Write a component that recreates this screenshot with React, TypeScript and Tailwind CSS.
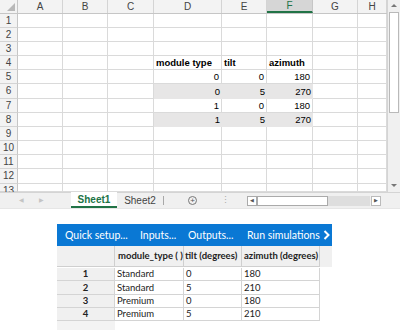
import React from 'react'

const cols = [
  { key: 'A', w: 45 },
  { key: 'B', w: 45 },
  { key: 'C', w: 46 },
  { key: 'D', w: 68 },
  { key: 'E', w: 45 },
  { key: 'F', w: 46 },
  { key: 'G', w: 45 },
  { key: 'H', w: 29 },
]

const rowHeights = [14, 14, 14, 14, 14, 15, 14, 14, 14, 14, 14, 15, 8]

type Cell = { text: string; bold?: boolean; right?: boolean; shade?: boolean }

const cells: Record<string, Cell> = {
  D4: { text: 'module type', bold: true },
  E4: { text: 'tilt', bold: true },
  F4: { text: 'azimuth', bold: true },
  D5: { text: '0', right: true },
  E5: { text: '0', right: true },
  F5: { text: '180', right: true },
  D6: { text: '0', right: true, shade: true },
  E6: { text: '5', right: true, shade: true },
  F6: { text: '270', right: true, shade: true },
  D7: { text: '1', right: true },
  E7: { text: '0', right: true },
  F7: { text: '180', right: true },
  D8: { text: '1', right: true, shade: true },
  E8: { text: '5', right: true, shade: true },
  F8: { text: '270', right: true, shade: true },
}

const tableRows = [
  ['1', 'Standard', '0', '180'],
  ['2', 'Standard', '5', '210'],
  ['3', 'Premium', '0', '180'],
  ['4', 'Premium', '5', '210'],
]

function Sheet() {
  return (
    <div className="flex h-[192px]">
      <div className="flex flex-col w-[387px] overflow-hidden">
        {/* column headers */}
        <div className="flex h-[14px] shrink-0 bg-[#f3f3f3] border-b border-[#c6c6c6]">
          <div className="relative w-[18px] shrink-0 border-r border-[#c6c6c6]">
            <div className="absolute right-[2px] bottom-[2px] w-0 h-0 border-l-[8px] border-l-transparent border-b-[8px] border-b-[#b8b8b8]" />
          </div>
          {cols.map((c) =>
            c.key === 'F' ? (
              <div
                key={c.key}
                style={{ width: c.w }}
                className="shrink-0 flex items-center justify-center bg-[#d6d6d6] border-r border-[#c6c6c6] border-b-2 border-b-[#217346] text-[10px] text-[#217346]"
              >
                {c.key}
              </div>
            ) : (
              <div
                key={c.key}
                style={{ width: c.w }}
                className="shrink-0 flex items-center justify-center border-r border-[#d4d4d4] text-[10px] text-[#444]"
              >
                {c.key}
              </div>
            )
          )}
        </div>
        {rowHeights.map((h, i) => {
          const r = i + 1
          return (
            <div key={r} style={{ height: h }} className="flex shrink-0 overflow-hidden">
              <div
                className={
                  'w-[18px] shrink-0 flex justify-center bg-[#f3f3f3] border-r border-b border-[#d4d4d4] border-r-[#c6c6c6] text-[10px] text-[#444] leading-none ' +
                  (r === 13 ? 'items-start pt-[2px]' : 'items-center')
                }
              >
                {r}
              </div>
              {cols.map((c) => {
                const cell = cells[c.key + r]
                return (
                  <div
                    key={c.key}
                    style={{ width: c.w }}
                    className={
                      'shrink-0 flex items-center px-[2px] text-[9.5px] text-black leading-none ' +
                      (cell?.shade ? 'bg-[#e7e6e6] ' : 'bg-white border-r border-b border-[#dadada] ') +
                      (cell?.right ? 'justify-end ' : '') +
                      (cell?.bold ? 'font-bold ' : '')
                    }
                  >
                    {cell?.text}
                  </div>
                )
              })}
            </div>
          )
        })}
      </div>
      {/* vertical scrollbar */}
      <div className="relative w-[13px] shrink-0 bg-[#f0f0f0] border-l border-[#d4d4d4]">
        <div className="absolute left-[3px] top-[4px] w-0 h-0 border-l-[3px] border-r-[3px] border-b-[3px] border-l-transparent border-r-transparent border-b-[#777]" />
        <div className="absolute left-[1px] right-[1px] top-[12px] h-[101px] bg-white border border-[#b9b9b9]" />
        <div className="absolute left-[3px] top-[184px] w-0 h-0 border-l-[3px] border-r-[3px] border-t-[3px] border-l-transparent border-r-transparent border-t-[#777]" />
      </div>
    </div>
  )
}

function TabBar() {
  return (
    <div className="flex items-stretch h-[17px] bg-[#f0f0f0] border-t border-[#d4d4d4] border-b border-b-[#e6e6e6] text-[10px]">
      <div className="w-[71px] shrink-0 flex items-center text-[#c4c4c4] text-[6px]">
        <span className="ml-[19px]">◀</span>
        <span className="ml-[15px]">▶</span>
      </div>
      <div className="w-[46px] shrink-0 flex items-center justify-center bg-white border-b-2 border-[#217346] -mt-px font-bold text-[#217346]">
        Sheet1
      </div>
      <div className="w-[46px] shrink-0 flex items-center justify-center text-[#444]">Sheet2</div>
      <div className="w-px my-[3px] bg-[#a8a8a8]" />
      <div className="w-[57px] shrink-0 flex items-center justify-center">
        <div className="w-[9px] h-[9px] rounded-full border border-[#777] flex items-center justify-center text-[8px] leading-none text-[#555]">
          +
        </div>
      </div>
      <div className="w-[13px] shrink-0 flex items-center text-[#aaa] text-[9px] leading-none">⋮</div>
      <div className="flex items-center ml-[13px]">
        <div className="w-[10px] h-[10px] border border-[#aaa] bg-white flex items-center justify-center text-[5px] text-[#555]">◀</div>
        <div className="w-[71px] h-[10px] bg-white border border-[#aaa]" />
        <div className="w-[42px] h-[10px] bg-[#dedede]" />
        <div className="w-[10px] h-[10px] ml-[1px] bg-white border border-[#bbb] flex items-center justify-center text-[5px] text-[#555]">▶</div>
      </div>
    </div>
  )
}

function SimTable() {
  return (
    <div className="ml-[57px] mt-[15px] w-[275px] font-['Lato','Noto_Sans',sans-serif]">
      <div className="flex items-center h-[22px] bg-[#0a78d4] text-white text-[10.5px] leading-none whitespace-nowrap overflow-hidden">
        <span className="ml-[8px] w-[75px] shrink-0">Quick setup...</span>
        <span className="w-[48px] shrink-0">Inputs...</span>
        <span className="w-[59px] shrink-0">Outputs...</span>
        <span className="shrink-0">Run simulations</span>
        <svg className="ml-[3px] shrink-0" width="7" height="10" viewBox="0 0 7 10">
          <path d="M1.5 1 L5.5 5 L1.5 9" fill="none" stroke="white" strokeWidth="2" />
        </svg>
      </div>
      <div className="flex h-[21px] bg-[#f0f0f0] text-[9.5px] font-bold text-[#222] whitespace-nowrap">
        <div className="w-[58px] border-r border-b border-[#cfcfcf]" />
        <div className="w-[69px] flex items-center px-[3px] border-r border-b border-[#cfcfcf]">module_type ( )</div>
        <div className="w-[58px] flex items-center px-[1px] border-r border-b border-[#cfcfcf] overflow-hidden">tilt (degrees)</div>
        <div className="w-[78px] flex items-center px-[2px] border-r border-b border-[#cfcfcf]">azimuth (degrees)</div>
      </div>
      <div className="mt-[1px] flex flex-col text-[9.5px] text-[#222] leading-none">
        {tableRows.map((r) => (
          <div key={r[0]} className="flex h-[13.25px]">
            <div className="w-[58px] flex items-center justify-center bg-[#f0f0f0] border-r border-b border-[#d4d4d4] font-bold">{r[0]}</div>
            <div className="w-[69px] flex items-center px-[2px] bg-white border-r border-b border-[#d4d4d4]">{r[1]}</div>
            <div className="w-[58px] flex items-center px-[2px] bg-white border-r border-b border-[#d4d4d4]">{r[2]}</div>
            <div className="w-[78px] flex items-center px-[2px] bg-white border-r border-b border-[#d4d4d4]">{r[3]}</div>
          </div>
        ))}
        <div className="w-[58px] h-[10px] bg-[#f3f3f3]" />
      </div>
    </div>
  )
}

export default function App() {
  return (
    <div className="w-[400px] h-[330px] overflow-hidden bg-white font-['Liberation_Sans',Arial,sans-serif]">
      <Sheet />
      <TabBar />
      <SimTable />
    </div>
  )
}
